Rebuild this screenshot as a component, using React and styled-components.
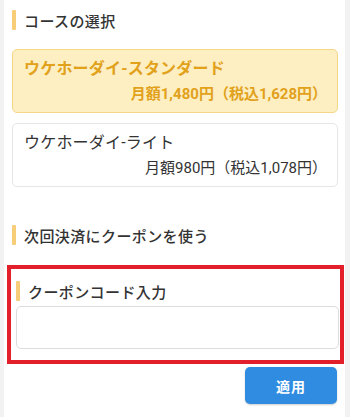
import React, { useState } from 'react'
import styled, { createGlobalStyle } from 'styled-components'

const GlobalStyle = createGlobalStyle`
  html, body {
    margin: 0;
    padding: 0;
    background: #f2f2f2;
  }
  body {
    font-family: Roboto, "Noto Sans CJK JP", "Noto Sans", sans-serif;
    color: #333;
  }
`

const Panel = styled.div`
  background: #fff;
  margin: 0 5px 0 4px;
  padding: 10px 7px 12px 8px;
  min-height: 395px;
`

const Heading = styled.div`
  display: flex;
  align-items: center;
  height: 20px;
  font-size: 15px;
  font-weight: 500;
  letter-spacing: 0.4px;
  color: #333;
  &::before {
    content: '';
    width: 4px;
    height: 20px;
    border-radius: 1px;
    background: #f8cd77;
    margin-right: 8px;
  }
`

const CourseList = styled.div`
  display: flex;
  flex-direction: column;
  gap: 10px;
  margin-top: 19px;
`

const Card = styled.div`
  border: 1px solid ${p => (p.$active ? '#f5d788' : '#e6e6e6')};
  background: ${p => (p.$active ? '#fdefc2' : '#fff')};
  border-radius: 5px;
  padding: 7px 10px 5px 11px;
  height: 50px;
  cursor: pointer;
  color: ${p => (p.$active ? '#e2a11b' : '#333')};
  font-weight: ${p => (p.$active ? 700 : 400)};
`

const CardTitle = styled.div`
  font-size: 16px;
  line-height: 24px;
  letter-spacing: 0.2px;
`

const CardPrice = styled.div`
  font-size: 15px;
  line-height: 26px;
  text-align: right;
`

const SectionHeading = styled(Heading)`
  margin-top: 38px;
`

const CouponBox = styled.div`
  border: 4px solid #e21f2a;
  margin: 20px -6px 0 -5px;
  padding: 12px 1px 11px 5px;
`

const CouponInput = styled.input`
  display: block;
  box-sizing: border-box;
  width: 100%;
  height: 43px;
  margin-top: 5px;
  border: 1px solid #dcdcdc;
  border-radius: 5px;
  padding: 0 10px;
  font-size: 15px;
  font-family: inherit;
  outline: none;
`

const Actions = styled.div`
  display: flex;
  justify-content: flex-end;
  margin-top: 3px;
  padding-right: 1px;
`

const ApplyButton = styled.button`
  width: 92px;
  height: 37px;
  border: none;
  border-radius: 5px;
  background: #2f8ce0;
  color: #fff;
  font-family: inherit;
  font-size: 14px;
  font-weight: 700;
  letter-spacing: 1px;
  box-shadow: 0 1px 2px rgba(0, 0, 0, 0.2);
`

const courses = [
  { id: 'standard', name: 'ウケホーダイ-スタンダード', price: '月額1,480円（税込1,628円）' },
  { id: 'lite', name: 'ウケホーダイ-ライト', price: '月額980円（税込1,078円）' },
]

export default function App() {
  const [selected, setSelected] = useState('standard')
  const [code, setCode] = useState('')

  return (
    <>
      <GlobalStyle />
      <Panel>
        <Heading>コースの選択</Heading>
        <CourseList>
          {courses.map(c => (
            <Card key={c.id} $active={selected === c.id} onClick={() => setSelected(c.id)}>
              <CardTitle>{c.name}</CardTitle>
              <CardPrice>{c.price}</CardPrice>
            </Card>
          ))}
        </CourseList>

        <SectionHeading>次回決済にクーポンを使う</SectionHeading>

        <CouponBox>
          <Heading>クーポンコード入力</Heading>
          <CouponInput value={code} onChange={e => setCode(e.target.value)} />
        </CouponBox>

        <Actions>
          <ApplyButton>適用</ApplyButton>
        </Actions>
      </Panel>
    </>
  )
}
